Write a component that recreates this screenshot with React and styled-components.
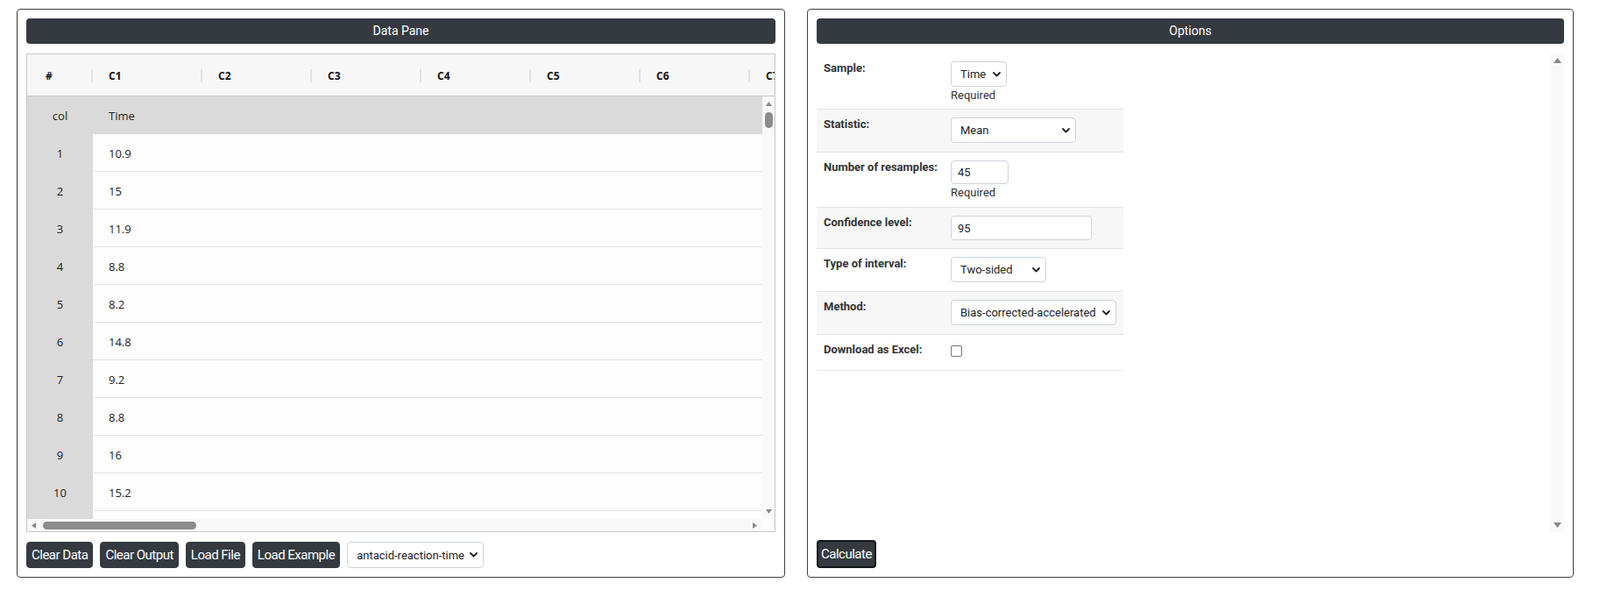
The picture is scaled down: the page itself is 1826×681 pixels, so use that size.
import React from "react";
import styled, { createGlobalStyle } from "styled-components";

const GlobalStyle = createGlobalStyle`
  html, body {
    margin: 0;
    padding: 0;
    background: #fff;
  }
  body {
    font-family: Roboto, "Liberation Sans", sans-serif;
    color: #212529;
  }
  * {
    box-sizing: border-box;
  }
`;

const Page = styled.div`
  display: flex;
  gap: 25px;
  padding: 10px 0 0 19px;
`;

const Panel = styled.section`
  width: ${({ $w }) => $w}px;
  height: 649px;
  border: 1px solid #3f3f3f;
  border-radius: 4px;
  padding: 10px;
  display: flex;
  flex-direction: column;
`;

const PanelTitle = styled.div`
  flex-shrink: 0;
  height: 29px;
  line-height: 29px;
  margin-bottom: 11px;
  background: #343a40;
  color: #fff;
  border-radius: 4px;
  text-align: center;
  font-size: 14px;
`;

/* ---------- data grid ---------- */

const Grid = styled.div`
  height: 546px;
  flex-shrink: 0;
  border: 1px solid #c8c8c8;
  display: flex;
  flex-direction: column;
  overflow: hidden;
  font-family: "Open Sans", "Noto Sans", sans-serif;
  font-size: 13px;
  color: #222;
`;

const HeadRow = styled.div`
  display: flex;
  height: 48px;
  flex-shrink: 0;
  background: #f7f7f7;
  border-bottom: 1px solid #c6c6c6;
`;

const HeadCell = styled.div`
  position: relative;
  flex-shrink: 0;
  width: ${({ $w }) => $w}px;
  padding-left: ${({ $pad }) => $pad}px;
  padding-top: 2px;
  display: flex;
  align-items: center;
  font-size: 12px;
  font-weight: 700;
  color: #111;

  &::after {
    content: "";
    position: absolute;
    right: 0;
    top: 17px;
    width: 2px;
    height: 15px;
    background: #e2e2e2;
  }
`;

const BodyArea = styled.div`
  display: flex;
  height: 482px;
  flex-shrink: 0;
`;

const Viewport = styled.div`
  flex: 1;
  overflow: hidden;
  background: #fdfdfd;
`;

const Row = styled.div`
  display: flex;
  height: 43px;
  background: ${({ $head }) => ($head ? "#dadada" : "transparent")};
`;

const IndexCell = styled.div`
  width: 75px;
  flex-shrink: 0;
  display: flex;
  align-items: center;
  justify-content: center;
  padding-top: 1px;
  background: #dadada;
`;

const ValueCell = styled.div`
  flex: 1;
  display: flex;
  align-items: center;
  padding-left: 18px;
  padding-top: 1px;
  border-bottom: ${({ $head }) => ($head ? "none" : "1px solid #e4e4e4")};
`;

const VTrack = styled.div`
  width: ${({ $w }) => $w}px;
  flex-shrink: 0;
  display: flex;
  flex-direction: column;
  align-items: center;
  padding: ${({ $pad }) => $pad};
  background: #f9f9f9;
`;

const HTrackRow = styled.div`
  display: flex;
  height: 14px;
  flex-shrink: 0;
  background: #f9f9f9;
`;

const HTrack = styled.div`
  flex: 1;
  display: flex;
  align-items: center;
  padding: 0 6px 0 5px;
`;

const Corner = styled.div`
  width: 14px;
  background: #fdfdfd;
`;

const Thumb = styled.div`
  background: #8c8c8c;
  border-radius: 5px;
  width: ${({ $w }) => $w}px;
  height: ${({ $h }) => $h}px;
  margin: ${({ $m }) => $m};
`;

const Spacer = styled.div`
  flex: 1;
`;

const Toolbar = styled.div`
  display: flex;
  gap: 8px;
  height: ${({ $h }) => $h}px;
  margin-top: ${({ $mt }) => $mt}px;
`;

const Button = styled.button`
  height: ${({ $h }) => $h || 30}px;
  padding: 0 ${({ $px }) => $px ?? 5}px;
  font-family: Roboto, "Liberation Sans", sans-serif;
  font-size: 15px;
  letter-spacing: -0.5px;
  color: #fff;
  background: #343a40;
  border: ${({ $focus }) => ($focus ? "2px solid #141619" : "1px solid #343a40")};
  border-radius: 4px;
  white-space: nowrap;
  cursor: pointer;
`;

const SelectBox = styled.div`
  width: ${({ $w }) => $w}px;
  height: ${({ $h }) => $h || 29}px;
  display: flex;
  align-items: center;
  justify-content: space-between;
  padding: 0 6px 0 10px;
  background: #fff;
  border: 1px solid #ced4da;
  border-radius: 4px;
  font-size: 13px;
  color: #212529;
  white-space: nowrap;
`;

/* ---------- options form ---------- */

const OptionsBody = styled.div`
  height: 546px;
  flex-shrink: 0;
  display: flex;
`;

const FormArea = styled.div`
  flex: 1;
`;

const FormTable = styled.div`
  width: 350px;
  font-size: 13px;
  color: #212529;
`;

const FormRow = styled.div`
  display: grid;
  grid-template-columns: 145px 1fr;
  padding: 9px 8px ${({ $pb }) => $pb}px;
  border-bottom: 1px solid #e1e4e7;
  background: ${({ $shade }) => ($shade ? "#f7f7f7" : "#fff")};
`;

const Label = styled.div`
  font-weight: 700;
  line-height: 15px;
  color: #333;
`;

const Hint = styled.div`
  margin-top: 2px;
  line-height: 16px;
  color: #333;
`;

const TextInput = styled.input`
  display: block;
  width: ${({ $w }) => $w}px;
  height: ${({ $h }) => $h}px;
  padding: 0 7px;
  font-family: Roboto, "Liberation Sans", sans-serif;
  font-size: 13px;
  color: #212529;
  background: #fff;
  border: 1px solid #ced4da;
  border-radius: 4px;
  outline: none;
`;

const CheckBox = styled.span`
  display: block;
  width: 13px;
  height: 13px;
  margin-top: 3px;
  background: #fff;
  border: 1px solid #767676;
  border-radius: 2px;
`;

const Chevron = () => (
  <svg width="9" height="6" viewBox="0 0 9 6">
    <path d="M1 1l3.5 3.5L8 1" fill="none" stroke="#222" strokeWidth="1.8" strokeLinecap="round" strokeLinejoin="round" />
  </svg>
);

const Arrow = ({ dir, size = 7 }) => {
  const s = size;
  const h = Math.round(s * 0.7);
  const d = {
    up: `M0 ${h}L${s / 2} 0L${s} ${h}Z`,
    down: `M0 0L${s} 0L${s / 2} ${h}Z`,
    left: `M${h} 0L${h} ${s}L0 ${s / 2}Z`,
    right: `M0 0L${h} ${s / 2}L0 ${s}Z`,
  }[dir];
  const horiz = dir === "left" || dir === "right";
  const w = horiz ? h : s;
  const ht = horiz ? s : h;
  return (
    <svg width={w} height={ht} viewBox={`0 0 ${w} ${ht}`}>
      <path d={d} fill="#888" />
    </svg>
  );
};

const Select = ({ w, h, children }) => (
  <SelectBox $w={w} $h={h}>
    <span>{children}</span>
    <Chevron />
  </SelectBox>
);

const values = ["10.9", "15", "11.9", "8.8", "8.2", "14.8", "9.2", "8.8", "16", "15.2"];
const columns = ["C1", "C2", "C3", "C4", "C5", "C6", "C7"];

function DataPane() {
  return (
    <Panel $w={877}>
      <PanelTitle>Data Pane</PanelTitle>
      <Grid>
        <HeadRow>
          <HeadCell $w={75} $pad={21}>#</HeadCell>
          {columns.map((c) => (
            <HeadCell key={c} $w={125} $pad={18}>
              {c}
            </HeadCell>
          ))}
        </HeadRow>
        <BodyArea>
          <Viewport>
            <Row $head>
              <IndexCell>col</IndexCell>
              <ValueCell $head>Time</ValueCell>
            </Row>
            {values.map((v, i) => (
              <Row key={i}>
                <IndexCell>{i + 1}</IndexCell>
                <ValueCell>{v}</ValueCell>
              </Row>
            ))}
            <Row>
              <IndexCell />
              <ValueCell />
            </Row>
          </Viewport>
          <VTrack $w={14} $pad="6px 0 6px">
            <Arrow dir="up" />
            <Thumb $w={9} $h={18} $m="7px 0 0" />
            <Spacer />
            <Arrow dir="down" />
          </VTrack>
        </BodyArea>
        <HTrackRow>
          <HTrack>
            <Arrow dir="left" />
            <Thumb $w={175} $h={9} $m="0 0 0 8px" />
            <Spacer />
            <Arrow dir="right" />
          </HTrack>
          <Corner />
        </HTrackRow>
      </Grid>
      <Toolbar $h={30} $mt={11}>
        <Button>Clear Data</Button>
        <Button>Clear Output</Button>
        <Button>Load File</Button>
        <Button>Load Example</Button>
        <Select w={156} h={30}>
          antacid-reaction-time
        </Select>
      </Toolbar>
    </Panel>
  );
}

function OptionsPane() {
  return (
    <Panel $w={875}>
      <PanelTitle>Options</PanelTitle>
      <OptionsBody>
        <FormArea>
          <FormTable>
            <FormRow $pb={7}>
              <Label>Sample:</Label>
              <div>
                <Select w={64}>Time</Select>
                <Hint>Required</Hint>
              </div>
            </FormRow>
            <FormRow $shade $pb={10}>
              <Label>Statistic:</Label>
              <Select w={143}>Mean</Select>
            </FormRow>
            <FormRow $pb={8}>
              <Label>Number of resamples:</Label>
              <div>
                <TextInput $w={66} $h={27} value="45" readOnly />
                <Hint>Required</Hint>
              </div>
            </FormRow>
            <FormRow $shade $pb={9}>
              <Label>Confidence level:</Label>
              <TextInput $w={161} $h={28} value="95" readOnly />
            </FormRow>
            <FormRow $pb={10}>
              <Label>Type of interval:</Label>
              <Select w={109}>Two-sided</Select>
            </FormRow>
            <FormRow $shade $pb={10}>
              <Label>Method:</Label>
              <Select w={189}>Bias-corrected-accelerated</Select>
            </FormRow>
            <FormRow $pb={15}>
              <Label>Download as Excel:</Label>
              <CheckBox />
            </FormRow>
          </FormTable>
        </FormArea>
        <VTrack $w={16} $pad="5px 0 5px">
          <Arrow dir="up" size={9} />
          <Spacer />
          <Arrow dir="down" size={9} />
        </VTrack>
      </OptionsBody>
      <Toolbar $h={32} $mt={9}>
        <Button $h={32} $px={3} $focus>
          Calculate
        </Button>
      </Toolbar>
    </Panel>
  );
}

export default function App() {
  return (
    <>
      <GlobalStyle />
      <Page>
        <DataPane />
        <OptionsPane />
      </Page>
    </>
  );
}
